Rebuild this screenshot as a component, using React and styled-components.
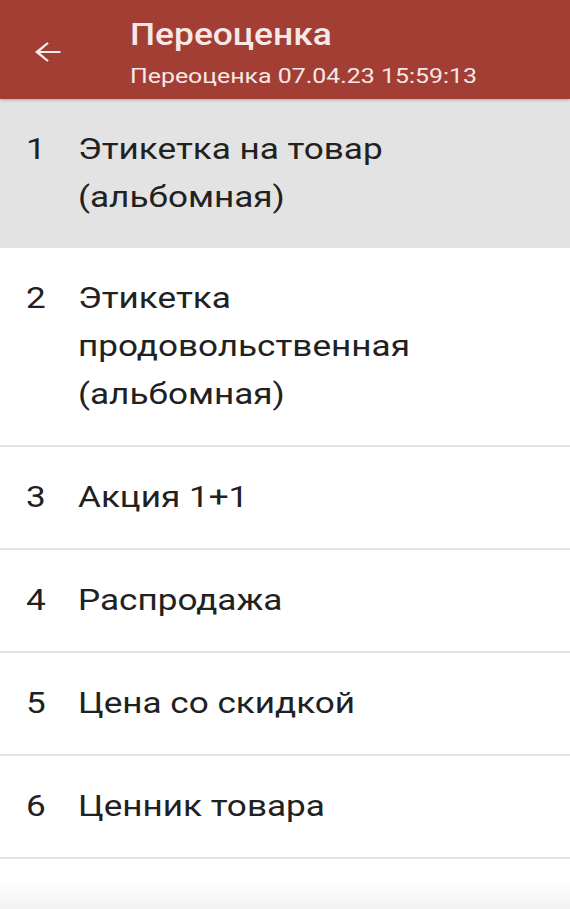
import React from "react";
import styled, { createGlobalStyle } from "styled-components";

const Global = createGlobalStyle`
  html, body { margin: 0; padding: 0; background: #fff; }
  body { font-family: Roboto, "Noto Sans", sans-serif; }
`;

const Screen = styled.div`
  width: 570px;
  height: 909px;
  display: flex;
  flex-direction: column;
  background: #fff;
  overflow: hidden;
  position: relative;
`;

const Wide = styled.span`
  display: inline-block;
  white-space: nowrap;
  transform: scaleX(${p => p.$sx || 1.17});
  transform-origin: left center;
`;

const Header = styled.header`
  height: 99px;
  flex: none;
  background: #a33e35;
  display: flex;
  align-items: flex-start;
  box-shadow: 0 1px 3px rgba(0,0,0,0.25);
  position: relative;
  z-index: 1;
`;

const BackButton = styled.div`
  width: 130px;
  height: 99px;
  flex: none;
  display: flex;
  align-items: center;
  padding-left: 28px;
  padding-top: 4px;
  box-sizing: border-box;
  color: #f7ecea;
`;

const Titles = styled.div`
  display: flex;
  flex-direction: column;
  color: #f5e8e6;
  padding-top: 17px;
`;

const Title = styled.div`
  font-size: 31px;
  font-weight: 500;
  line-height: 36px;
`;

const Subtitle = styled.div`
  font-size: 21px;
  line-height: 28px;
  margin-top: 9px;
`;

const List = styled.div`
  display: flex;
  flex-direction: column;
`;

const Row = styled.div`
  display: flex;
  align-items: flex-start;
  padding: 26px 20px 27px 0;
  background: ${p => (p.$selected ? "#e3e3e3" : "#fff")};
  border-bottom: ${p => (p.$selected ? "none" : "2px solid #e4e4e4")};
  font-size: 30px;
  line-height: 48px;
  color: #212121;
`;

const Num = styled.div`
  width: 78px;
  flex: none;
  padding-left: 26px;
  box-sizing: border-box;
`;

const Label = styled.div`
  flex: 1;
  display: flex;
  flex-direction: column;
  align-items: flex-start;
`;

const BottomShade = styled.div`
  position: absolute;
  left: 0;
  right: 0;
  bottom: 0;
  height: 28px;
  background: linear-gradient(to bottom, rgba(242,242,242,0), rgba(242,242,242,1));
`;

const items = [
  ["1", ["Этикетка на товар", "(альбомная)"], true],
  ["2", ["Этикетка", "продовольственная", "(альбомная)"]],
  ["3", ["Акция 1+1"]],
  ["4", ["Распродажа"]],
  ["5", ["Цена со скидкой"]],
  ["6", ["Ценник товара"]],
];

export default function App() {
  return (
    <>
      <Global />
      <Screen>
        <Header>
          <BackButton>
            <svg width="39" height="32" viewBox="0 0 24 24" preserveAspectRatio="none" fill="currentColor">
              <path d="M20 11.2H7.5l5.3-5.5-1-1L4.3 12l7.5 7.3 1-1-5.3-5.5H20v-1.6z" />
            </svg>
          </BackButton>
          <Titles>
            <Title><Wide $sx={1.14}>Переоценка</Wide></Title>
            <Subtitle><Wide $sx={1.185}>Переоценка 07.04.23 15:59:13</Wide></Subtitle>
          </Titles>
        </Header>
        <List>
          {items.map(([n, lines, sel]) => (
            <Row key={n} $selected={sel}>
              <Num><Wide>{n}</Wide></Num>
              <Label>
                {lines.map((l, i) => (
                  <Wide key={i}>{l}</Wide>
                ))}
              </Label>
            </Row>
          ))}
        </List>
        <BottomShade />
      </Screen>
    </>
  );
}
